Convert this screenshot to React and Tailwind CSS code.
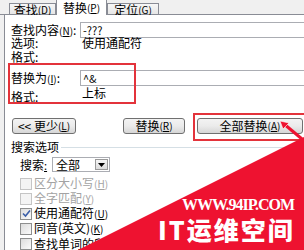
import React from 'react';

const Acc = ({ k }) => (
  <span className="text-[10px]">(<span className="underline">{k}</span>)</span>
);

function Tab({ label, k, active, w }) {
  if (active) {
    return (
      <div className={`${w} relative z-10 -mb-px flex h-[16px] justify-center whitespace-nowrap border-x border-t border-[#898c95] bg-white pt-[1px] leading-[13px]`}>
        {label}<Acc k={k} />
      </div>
    );
  }
  return (
    <div className={`${w} flex h-[11px] justify-center whitespace-nowrap border-x border-t border-[#898c95] bg-gradient-to-b from-[#f7f7f7] to-[#e6e6e6] leading-[11px]`}>
      {label}<Acc k={k} />
    </div>
  );
}

function Button({ children, w, className = '' }) {
  return (
    <div className={`${w} ${className} flex h-[16px] shrink-0 items-center justify-center whitespace-nowrap rounded-[3px] border border-[#707070] bg-gradient-to-b from-[#f3f3f3] via-[#ebebeb] to-[#d6d6d6] leading-[12px]`}>
      {children}
    </div>
  );
}

function Check({ label, k, checked, disabled }) {
  return (
    <div className="flex h-[15px] items-center pl-[9px]">
      <div className={`flex h-[12px] w-[12px] shrink-0 items-center justify-center border ${disabled ? 'border-[#c5c5c5] bg-[#f4f4f4]' : 'border-[#8e8f8f] bg-gradient-to-br from-[#dcdcdc] to-[#fbfbfb]'}`}>
        {checked && (
          <svg width="9" height="9" viewBox="0 0 9 9">
            <path d="M1 4.5 L3.5 7 L8 1.5" fill="none" stroke="#3a5ea8" strokeWidth="1.6" />
          </svg>
        )}
      </div>
      <span className={`ml-[2px] whitespace-nowrap leading-[12px] ${disabled ? 'text-[#a3a3a3]' : 'text-black'}`}>
        {label}{k && <Acc k={k} />}
      </span>
    </div>
  );
}

export default function App() {
  return (
    <div className="relative h-[250px] w-[304px] overflow-hidden bg-[#f0f0f0] font-['Noto_Sans_CJK_SC','Liberation_Sans',sans-serif] text-[12px] text-black">
      {/* tabs */}
      <div className="flex h-[15px] items-end border-b border-[#898c95] pl-[9px]">
        <Tab label="查找" k="D" w="w-[47px]" />
        <Tab label="替换" k="P" w="w-[51px]" active />
        <Tab label="定位" k="G" w="w-[52px]" />
      </div>

      <div className="flex h-[235px]">
        <div className="w-[4px] shrink-0" />
        <div className="flex-1 overflow-hidden border-l border-[#898c95] bg-white pl-[6px]">
          {/* find */}
          <div className="mt-[7px] flex h-[16px] items-center">
            <span className="w-[69px] shrink-0 whitespace-nowrap leading-[12px]">查找内容<Acc k="N" />:</span>
            <div className="flex h-[16px] w-[240px] shrink-0 items-center border border-[#abadb3] pl-[2px] text-[11px] leading-[12px]">-???</div>
          </div>
          <div className="-mt-px flex h-[12px] items-center leading-[12px]">
            <span className="w-[71px] shrink-0">选项:</span>
            <span>使用通配符</span>
          </div>
          <div className="mt-[1px] flex h-[14px] items-center leading-[12px]">格式:</div>

          {/* replace */}
          <div className="mt-[6px] flex h-[16px] items-center">
            <span className="w-[69px] shrink-0 whitespace-nowrap leading-[12px]">替换为<Acc k="I" />:</span>
            <div className="flex h-[16px] w-[240px] shrink-0 items-center border border-[#abadb3] pl-[2px] text-[11px] leading-[12px]">^&amp;</div>
          </div>
          <div className="flex h-[18px] items-start">
            <span className="mt-[4px] w-[71px] shrink-0 leading-[14px]">格式:</span>
            <span className="leading-[14px]">上标</span>
          </div>

          {/* buttons */}
          <div className="mt-[14px] flex items-center">
            <Button w="w-[64px]" className="ml-[1px]">&lt;&lt; 更少<Acc k="L" /></Button>
            <Button w="w-[62px]" className="ml-[47px]">替换<Acc k="R" /></Button>
            <Button w="w-[106px]" className="ml-[12px]">全部替换<Acc k="A" /></Button>
          </div>

          {/* search options */}
          <div className="mt-[6px] flex h-[14px] items-center gap-[2px] leading-[12px]">
            <span className="shrink-0">搜索选项</span>
            <div className="h-px flex-1 bg-[#d5dfe5]" />
          </div>
          <div className="mt-[3px] flex h-[15px] items-center pl-[9px]">
            <span className="w-[32px] shrink-0 leading-[12px]">搜索<span className="text-[11px] underline">:</span></span>
            <div className="flex h-[15px] w-[58px] items-center justify-between border border-[#abadb3] pl-[3px] pr-[1px] leading-[12px]">
              <span>全部</span>
              <div className="flex h-[11px] w-[13px] items-center justify-center border border-[#9a9a9a] bg-gradient-to-b from-[#f5f5f5] to-[#dcdcdc]">
                <svg width="7" height="4" viewBox="0 0 7 4"><path d="M0 0 H7 L3.5 4 Z" fill="#000" /></svg>
              </div>
            </div>
          </div>

          <div className="mt-[4px]">
            <Check label="区分大小写" k="H" disabled />
            <Check label="全字匹配" k="Y" disabled />
            <Check label="使用通配符" k="U" checked />
            <Check label="同音(英文)" k="K" />
            <Check label="查找单词的所有" />
          </div>
        </div>
      </div>

      {/* annotations */}
      <div className="absolute left-[8px] top-[63px] h-[41px] w-[128px] border-2 border-[#e3333b]" />
      <div className="absolute left-[193px] top-[113px] h-[28px] w-[114px] border-2 border-[#e3333b]" />

      <div className="absolute bottom-0 left-[78px] right-0 top-[137px] bg-[#ee1230] [clip-path:polygon(100%_0,100%_100%,0_100%)]" />
      <svg className="absolute left-[276px] top-[118px]" width="28" height="24" viewBox="0 0 28 24">
        <path d="M8 6 L26 21" stroke="#ee1230" strokeWidth="3" />
        <path d="M4 3 L13 5 L7 11 Z" fill="#ee1230" stroke="#fff" strokeWidth="0.6" />
      </svg>

      <div className="absolute left-[182px] top-[197px] font-['Liberation_Serif',serif] text-[16px] font-bold leading-[16px] tracking-[-1px] text-white">
        WWW.94IP.COM
      </div>
      <div className="absolute left-[158px] top-[215px] whitespace-nowrap text-[25px] font-black leading-[28px] tracking-[2px] text-white">
        IT运维空间
      </div>
    </div>
  );
}
